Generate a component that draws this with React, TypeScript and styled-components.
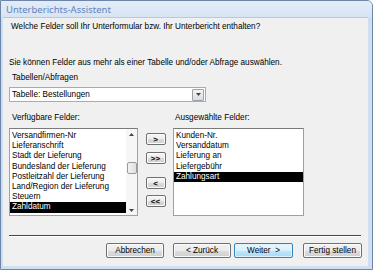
import React from "react";
import styled, { createGlobalStyle } from "styled-components";

const Global = createGlobalStyle`
  html, body { margin: 0; padding: 0; background: #fff; }
  body { font-family: "Liberation Sans", Arial, sans-serif; }
  * { box-sizing: border-box; }
`;

const Frame = styled.div`
  width: 373px;
  height: 270px;
  display: flex;
  flex-direction: column;
  background: #cfdef0;
  border: 1px solid #6d86a8;
  border-radius: 0 6px 0 0;
  overflow: hidden;
`;

const TitleBar = styled.div`
  height: 16px;
  flex: none;
  display: flex;
  align-items: center;
  padding-left: 5px;
  background: linear-gradient(#e1ecf8, #d6e4f4);
  color: #6283b8;
  font-size: 9.5px;
  font-family: "Noto Sans", "Liberation Sans", sans-serif;
`;

const Body = styled.div`
  flex: 1;
  display: flex;
  flex-direction: column;
  margin: 0 4px 3px 2px;
  background: #f0f0f0;
  border-top: 1px solid #b7c9df;
  padding: 4px 6px 0 6px;
  font-size: 8.2px;
  color: #000;
`;

const Text = styled.div<{ $mt?: number; $ml?: number; $w?: number }>`
  line-height: 10px;
  height: 10px;
  margin-top: ${(p) => p.$mt ?? 0}px;
  margin-left: ${(p) => p.$ml ?? 0}px;
  width: ${(p) => (p.$w ? `${p.$w}px` : "auto")};
  white-space: nowrap;
`;

const Select = styled.div`
  margin-top: 4px;
  width: 197px;
  height: 15px;
  background: #fff;
  border: 1px solid #a5acb5;
  display: flex;
  align-items: center;
  padding-left: 2px;
  justify-content: space-between;
`;

const DropBtn = styled.div`
  width: 12px;
  height: 12px;
  margin-right: 1px;
  border: 1px solid #9aa3ad;
  border-radius: 1px;
  background: linear-gradient(#f4f4f4, #dcdcdc);
  display: flex;
  align-items: center;
  justify-content: center;
`;

const LabelsRow = styled.div`
  display: flex;
  margin-top: 11px;
`;

const Lists = styled.div`
  display: flex;
  margin-top: 5px;
  align-items: flex-start;
`;

const ListBox = styled.div<{ $w: number }>`
  width: ${(p) => p.$w}px;
  height: 88px;
  background: #fff;
  border: 1px solid #a0a0a0;
  border-top-color: #7a7a7a;
  display: flex;
`;

const Items = styled.div`
  flex: 1;
  padding-top: 2px;
`;

const Item = styled.div<{ $sel?: boolean }>`
  height: 10.2px;
  line-height: 10.2px;
  padding-left: 2px;
  white-space: nowrap;
  overflow: hidden;
  background: ${(p) => (p.$sel ? "#000" : "transparent")};
  color: ${(p) => (p.$sel ? "#fff" : "#000")};
`;

const ScrollBar = styled.div`
  width: 11px;
  display: flex;
  flex-direction: column;
  align-items: center;
  background: #f6f6f6;
`;

const Arrow = styled.div`
  height: 10px;
  display: flex;
  align-items: center;
  justify-content: center;
`;

const Track = styled.div`
  flex: 1;
  width: 100%;
  display: flex;
  flex-direction: column;
  align-items: center;
  padding-top: 23px;
`;

const Thumb = styled.div`
  width: 10px;
  height: 12px;
  border: 1px solid #9a9a9a;
  border-radius: 2px;
  background: linear-gradient(90deg, #f2f2f2, #e0e0e0);
`;

const MoveCol = styled.div`
  width: 35px;
  display: flex;
  flex-direction: column;
  align-items: center;
  padding-top: 5px;
`;

const SmallBtn = styled.div<{ $mt: number }>`
  margin-top: ${(p) => p.$mt}px;
  width: 20px;
  height: 12px;
  border: 1px solid #707070;
  border-radius: 2px;
  background: linear-gradient(#f6f6f6 0%, #ececec 50%, #dcdcdc 51%, #cfcfcf 100%);
  display: flex;
  align-items: center;
  justify-content: center;
  font-weight: bold;
  font-size: 8px;
  box-shadow: inset 0 0 0 1px #fbfbfb;
`;

const Separator = styled.div`
  margin-top: 19px;
  height: 1px;
  background: #454545;
  margin-right: 1px;
  box-shadow: 0 1px 0 #ffffff;
`;

const ButtonRow = styled.div`
  display: flex;
  justify-content: flex-end;
  margin-top: 7px;
`;

const Btn = styled.div<{ $focus?: boolean; $w: number; $ml: number }>`
  width: ${(p) => p.$w}px;
  margin-left: ${(p) => p.$ml}px;
  height: 15px;
  border: 1px solid ${(p) => (p.$focus ? "#3c7fb1" : "#707070")};
  border-radius: 2px;
  background: ${(p) =>
    p.$focus
      ? "linear-gradient(#eaf6fd 0%, #d9f0fc 50%, #bee6fd 51%, #a7d9f5 100%)"
      : "linear-gradient(#f2f2f2 0%, #ebebeb 50%, #dddddd 51%, #cfcfcf 100%)"};
  box-shadow: inset 0 0 0 1px ${(p) => (p.$focus ? "#dff2fc" : "#fbfbfb")};
  display: flex;
  align-items: center;
  justify-content: center;
  white-space: nowrap;
`;

const Tri = ({ down }: { down?: boolean }) => (
  <svg width="5" height="3" viewBox="0 0 5 3">
    <path d={down ? "M0 0H5L2.5 3Z" : "M0 3H5L2.5 0Z"} fill="#444" />
  </svg>
);

const available = [
  "Versandfirmen-Nr",
  "Lieferanschrift",
  "Stadt der Lieferung",
  "Bundesland der Lieferung",
  "Postleitzahl der Lieferung",
  "Land/Region der Lieferung",
  "Steuern",
  "Zahldatum",
];

const selected = ["Kunden-Nr.", "Versanddatum", "Lieferung an", "Liefergebühr", "Zahlungsart"];

export default function App() {
  return (
    <>
      <Global />
      <Frame>
        <TitleBar>Unterberichts-Assistent</TitleBar>
        <Body>
          <Text $ml={2}>Welche Felder soll Ihr Unterformular bzw. Ihr Unterbericht enthalten?</Text>
          <Text $mt={26}>Sie können Felder aus mehr als einer Tabelle und/oder Abfrage auswählen.</Text>
          <Text $mt={5} $ml={3}>Tabellen/Abfragen</Text>
          <Select>
            <span>Tabelle: Bestellungen</span>
            <DropBtn>
              <Tri down />
            </DropBtn>
          </Select>
          <LabelsRow>
            <Text $ml={3} $w={163}>Verfügbare Felder:</Text>
            <Text>Ausgewählte Felder:</Text>
          </LabelsRow>
          <Lists>
            <ListBox $w={129}>
              <Items>
                {available.map((a, i) => (
                  <Item key={a} $sel={i === available.length - 1}>{a}</Item>
                ))}
              </Items>
              <ScrollBar>
                <Arrow><Tri /></Arrow>
                <Track><Thumb /></Track>
                <Arrow><Tri down /></Arrow>
              </ScrollBar>
            </ListBox>
            <MoveCol>
              <SmallBtn $mt={0}>&gt;</SmallBtn>
              <SmallBtn $mt={7}>&gt;&gt;</SmallBtn>
              <SmallBtn $mt={13}>&lt;</SmallBtn>
              <SmallBtn $mt={6}>&lt;&lt;</SmallBtn>
            </MoveCol>
            <ListBox $w={131}>
              <Items>
                {selected.map((a, i) => (
                  <Item key={a} $sel={i === selected.length - 1}>{a}</Item>
                ))}
              </Items>
            </ListBox>
          </Lists>
          <Separator />
          <ButtonRow>
            <Btn $w={58} $ml={0}>Abbrechen</Btn>
            <Btn $w={58} $ml={9}>&lt; Zurück</Btn>
            <Btn $focus $w={59} $ml={3}>Weiter &nbsp;&gt;</Btn>
            <Btn $w={59} $ml={10}>Fertig stellen</Btn>
          </ButtonRow>
        </Body>
      </Frame>
    </>
  );
}
